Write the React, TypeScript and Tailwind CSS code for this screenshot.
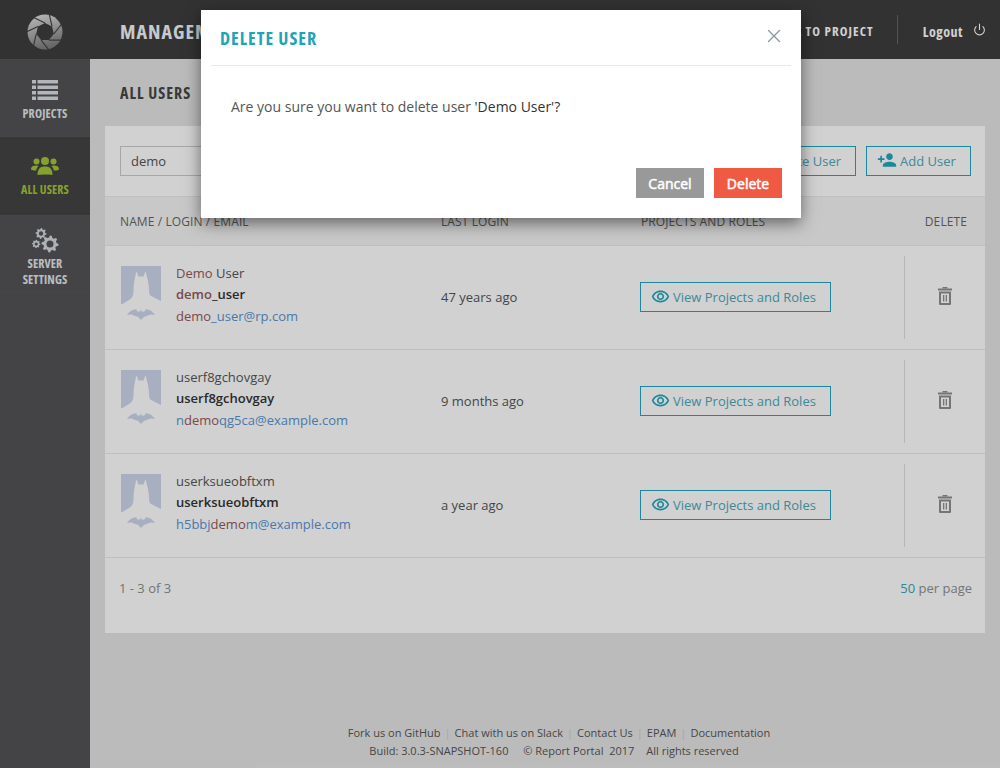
import { Power, X } from 'lucide-react';
import { MdOutlineRemoveRedEye, MdPersonAdd } from 'react-icons/md';
import type { ReactNode } from 'react';

const condensed = "font-['Open_Sans',sans-serif] font-bold [font-stretch:75%]";

const users = [
  {
    name: <><Hit>Demo</Hit> User</>,
    login: <><Hit>demo</Hit>_user</>,
    email: <><Hit>demo</Hit>_user@rp.com</>,
    lastLogin: '47 years ago',
  },
  {
    name: 'userf8gchovgay',
    login: 'userf8gchovgay',
    email: <>n<Hit>demo</Hit>qg5ca@example.com</>,
    lastLogin: '9 months ago',
  },
  {
    name: 'userksueobftxm',
    login: 'userksueobftxm',
    email: <>h5bbj<Hit>demo</Hit>m@example.com</>,
    lastLogin: 'a year ago',
  },
];

function Hit({ children }: { children: ReactNode }) {
  return <span className="text-[#96595a]">{children}</span>;
}

function Logo() {
  // aperture blades: one cut line per corner of the inner heptagon
  const blades = Array.from({ length: 7 }, (_, i) => {
    const a = (i * 2 * Math.PI) / 7 - Math.PI / 2;
    const b = ((i + 1) * 2 * Math.PI) / 7 - Math.PI / 2;
    const x1 = 18 + 9 * Math.cos(a);
    const y1 = 18 + 9 * Math.sin(a);
    const x2 = 18 + 9 * Math.cos(b);
    const y2 = 18 + 9 * Math.sin(b);
    return `M${x1} ${y1}L${x1 + (x2 - x1) * -1.9} ${y1 + (y2 - y1) * -1.9}`;
  });
  const hole = Array.from({ length: 7 }, (_, i) => {
    const a = (i * 2 * Math.PI) / 7 - Math.PI / 2;
    return `${18 + 9 * Math.cos(a)},${18 + 9 * Math.sin(a)}`;
  }).join(' ');
  return (
    <svg width="36" height="36" viewBox="0 0 36 36">
      <defs>
        <linearGradient id="logo" x1="0" y1="0" x2="0.3" y2="1">
          <stop offset="0" stopColor="#e6e6e6" />
          <stop offset="1" stopColor="#808080" />
        </linearGradient>
      </defs>
      <circle cx="18" cy="18" r="17.500" fill="url(#logo)" />
      <polygon points={hole} fill="#3e3e3e" />
      {blades.map((d, i) => (
        <path key={i} d={d} stroke="#3e3e3e" strokeWidth="1.100" fill="none" />
      ))}
    </svg>
  );
}

function ListIcon() {
  return (
    <svg width="26" height="20" viewBox="0 0 26 20" fill="#d9dde2">
      {[0, 5.5, 11, 16.5].map((y) => (
        <g key={y}>
          <rect x="0" y={y} width="4" height="3.500" />
          <rect x="5.500" y={y} width="20.500" height="3.500" />
        </g>
      ))}
    </svg>
  );
}

function UsersIcon() {
  return (
    <svg width="28" height="18" viewBox="0 0 28 18" fill="#a4c639">
      <circle cx="14" cy="4" r="4" />
      <circle cx="5.500" cy="4.500" r="3" />
      <circle cx="22.500" cy="4.500" r="3" />
      <path d="M0 12C0 9.500 2 8.500 5.500 8.500C6.500 8.500 7 8.700 7.500 9C6 10.500 5.300 12 5.200 13.500C3 13.500 0 13.500 0 12Z" />
      <path d="M28 12C28 9.500 26 8.500 22.500 8.500C21.500 8.500 21 8.700 20.500 9C22 10.500 22.700 12 22.800 13.500C25 13.500 28 13.500 28 12Z" />
      <path d="M6.500 18C6.500 12 9 9.500 14 9.500C19 9.500 21.500 12 21.500 18C18 17.200 10 17.200 6.500 18Z" />
    </svg>
  );
}

function gearPath(cx: number, cy: number, r: number) {
  const teeth = 8;
  const pts: string[] = [];
  for (let i = 0; i < teeth * 4; i++) {
    const a = (i * Math.PI) / (teeth * 2);
    const out = i % 4 === 0 || i % 4 === 1;
    const rad = out ? r : r * 0.76;
    pts.push(`${cx + rad * Math.cos(a)} ${cy + rad * Math.sin(a)}`);
  }
  return `M${pts.join('L')}Z`;
}

function GearsIcon() {
  const gears = [
    { x: 18, y: 16, r: 8.500, hole: 3.500 },
    { x: 9, y: 5.500, r: 5.500, hole: 2.200 },
    { x: 4.200, y: 16, r: 4.200, hole: 1.600 },
  ];
  return (
    <svg width="27" height="25" viewBox="0 0 27 25" fill="#d3d7dc">
      {gears.map((g) => (
        <g key={g.x}>
          <path d={gearPath(g.x, g.y, g.r)} />
          <circle cx={g.x} cy={g.y} r={g.hole} fill="#545456" />
        </g>
      ))}
    </svg>
  );
}

function TrashIcon() {
  return (
    <svg width="14" height="18" viewBox="0 0 14 18" fill="#8f8f8f">
      <rect x="4.500" y="0" width="5" height="1.500" />
      <rect x="0" y="1.500" width="14" height="2" />
      <path fillRule="evenodd" d="M1 4.500h12V17a1 1 0 0 1-1 1H2a1 1 0 0 1-1-1zM3 6.500v9.500h8V6.500z" />
      <rect x="5" y="8" width="1.300" height="6.500" />
      <rect x="7.700" y="8" width="1.300" height="6.500" />
    </svg>
  );
}

function Avatar() {
  return (
    <svg width="40" height="54" viewBox="0 0 40 54" className="shrink-0">
      <rect width="40" height="38" fill="#cdd6ec" />
      <path
        d="M15.500 5L17.500 10.500H22.500L24.500 5C26 11 28 17 28 24C28 27 28.500 29 30 30L40 35V42H0V39L9.500 33C12 31 12.500 28 12.500 24C12.500 17 14 11 15.500 5Z"
        fill="#ffffff"
      />
      <path
        d="M6 49C9 44 13 43 15.500 43.500C16 45.500 17 46 18.500 45.500L19.500 44L21 45.500C22.500 46 24 45.500 24.500 43.500C27 43 31 44 34 49C31 48 28 48.500 26 50C24 50 22 51.500 20 54C18 51.500 16 50 14 50C12 48.500 9 48 6 49Z"
        fill="#cdd6ec"
      />
    </svg>
  );
}

function NavItem({
  icon,
  label,
  active,
  className,
}: {
  icon: ReactNode;
  label: ReactNode;
  active?: boolean;
  className: string;
}) {
  return (
    <div
      className={`flex flex-col items-center border-b border-[#575757] ${className} ${
        active ? 'bg-[#444444] text-[#a4c639]' : 'bg-[#545456] text-[#e3e7ec]'
      }`}
    >
      <div className="flex h-[26px] items-center">{icon}</div>
      <div className={`${condensed} mt-[3px] text-center text-[12px] leading-4 tracking-[0.15px]`}>{label}</div>
    </div>
  );
}

function Sidebar() {
  return (
    <aside className="flex w-[90px] shrink-0 flex-col bg-[#545456]">
      <div className="flex h-[60px] items-center justify-center border-b border-[#575757] bg-[#3e3e3e] pt-[4px]">
        <Logo />
      </div>
      <NavItem icon={<ListIcon />} label="PROJECTS" className="h-[77px] pt-[17px]" />
      <NavItem icon={<UsersIcon />} label="ALL USERS" active className="h-[79px] pt-[16px]" />
      <NavItem
        icon={<GearsIcon />}
        label={<>SERVER<br />SETTINGS</>}
        className="h-[77px] pt-[11px]"
      />
    </aside>
  );
}

function OutlineButton({ children, className }: { children: ReactNode; className: string }) {
  return (
    <span className={`flex h-[30px] items-center border border-[#1fa8be] text-[13px] text-[#4ba9ba] ${className}`}>
      {children}
    </span>
  );
}

function UserRow({ user }: { user: (typeof users)[number] }) {
  return (
    <div className="flex h-[104px] border-b border-[#e9e9e9] pl-[16px] pr-[20px] pt-[20px]">
      <Avatar />
      <div className="ml-[15px] -mt-[3px] w-[265px] text-[13px]">
        <div className="leading-[21px] text-[#555555]">{user.name}</div>
        <div className="font-semibold leading-[21px] text-[#333333]">{user.login}</div>
        <div className="leading-[23px] text-[#5a94d0]">{user.email}</div>
      </div>
      <div className="w-[199px] pt-[19px] text-[13px] leading-[24px] text-[#555555]">{user.lastLogin}</div>
      <div className="w-[264px] pt-[16px]">
        <OutlineButton className="w-[191px] pl-[10px]">
          <MdOutlineRemoveRedEye size={19} color="#1fa8be" className="mr-[3px] -mt-[2px]" />
          <span className="pt-[1px]">View Projects and Roles</span>
        </OutlineButton>
      </div>
      <div className="-mt-[10px] h-[83px] flex-1 border-l border-[#dedede] pl-[33px] pt-[31px]">
        <TrashIcon />
      </div>
    </div>
  );
}

function UsersCard() {
  return (
    <section className="mx-[15px] h-[507px] bg-white">
      <div className="flex h-[70px] items-center justify-between pl-[15px] pr-[14px]">
        <div className="flex h-[30px] w-[200px] items-center border border-[#cccccc] pl-[10px] pt-[1px] text-[13px] text-[#555555]">
          demo
        </div>
        <div className="flex gap-[10px]">
          <OutlineButton className="w-[130px] justify-end pr-[14px]">
            <span className="pt-[1px]">Invite User</span>
          </OutlineButton>
          <OutlineButton className="w-[105px] pl-[10px]">
            <MdPersonAdd size={20} color="#1fa8be" className="mr-[3px] -mt-[2px]" />
            <span className="pt-[1px]">Add User</span>
          </OutlineButton>
        </div>
      </div>
      <div className="flex h-[50px] items-center border-y border-[#e9e9e9] bg-[#f5f5f5] pl-[15px] pr-[18px] pt-[1px] text-[12px] tracking-[0.1px] text-[#666666]">
        <div className="w-[321px]">NAME / LOGIN / EMAIL</div>
        <div className="w-[200px]">LAST LOGIN</div>
        <div className="flex-1">PROJECTS AND ROLES</div>
        <div>DELETE</div>
      </div>
      {users.map((user, i) => (
        <UserRow key={i} user={user} />
      ))}
      <div className="flex items-center justify-between pl-[14px] pr-[13px] pt-[20px] text-[13px] leading-5 text-[#8f8f8f]">
        <div>1 - 3 of 3</div>
        <div>
          <span className="text-[#3ea5b8]">50</span> per page
        </div>
      </div>
    </section>
  );
}

function Footer() {
  const sep = <span className="mx-[4px] text-[#cccccc]">|</span>;
  return (
    <footer className="mt-auto h-[44px] pl-[28px] text-center text-[11px] leading-[18px] text-[#555555]">
      <div>
        Fork us on GitHub{sep}Chat with us on Slack{sep}Contact Us{sep}EPAM{sep}Documentation
      </div>
      <div className="pr-[10px]">
        Build: 3.0.3-SNAPSHOT-160 <span className="ml-[12px]">© Report Portal&nbsp; 2017</span>
        <span className="ml-[12px]">All rights reserved</span>
      </div>
    </footer>
  );
}

function DeleteModal() {
  return (
    <div className="absolute left-[201px] top-[10px] h-[208px] w-[600px] bg-white shadow-[0_5px_15px_rgba(0,0,0,0.5)]">
      <div className="mx-[10px] flex h-[56px] items-center justify-between border-b border-[#e9e9e9] pl-[9px] pr-[6px]">
        <h2 className={`${condensed} mt-[2px] text-[18px] tracking-[1px] text-[#1fa3b9]`}>DELETE USER</h2>
        <X size={22} strokeWidth={1.5} className="-mt-[4px] text-[#8c9aa0]" />
      </div>
      <p className="pl-[30px] pt-[31px] text-[14px] leading-5 text-[#555555]">
        Are you sure you want to delete user <span className="font-medium text-[#333333]">'Demo User'?</span>
      </p>
      <div className="flex justify-end gap-[10px] pr-[19px] pt-[51px]">
        <button className="h-[30px] w-[68px] bg-[#999999] text-[14px] text-white [-webkit-text-stroke:0.5px_white]">
          Cancel
        </button>
        <button className="h-[30px] w-[68px] bg-[#ee5a43] text-[14px] text-white [-webkit-text-stroke:0.5px_white]">
          Delete
        </button>
      </div>
    </div>
  );
}

export default function App() {
  return (
    <div className="relative flex h-screen overflow-hidden font-['Open_Sans',sans-serif]">
      <Sidebar />
      <main className="flex flex-1 flex-col bg-[#e5e5e5]">
        <header className="flex h-[59px] shrink-0 items-center bg-[#3e3e3e] pl-[30px] text-white">
          <div className={`${condensed} mt-[4px] text-[20px] tracking-[1px] text-[#f2f6fa]`}>MANAGEMENT</div>
          <div className={`${condensed} ml-auto mt-[4px] text-[13px] tracking-[1.1px]`}>BACK TO PROJECT</div>
          <div className="ml-[23px] -mt-[1px] h-[29px] w-px bg-[#666666]" />
          <div className={`${condensed} ml-[25px] mt-[4px] text-[14px] tracking-[0.5px]`}>Logout</div>
          <Power size={13} strokeWidth={2} className="ml-[10px] mr-[14px]" />
        </header>
        <h1 className={`${condensed} h-[67px] pl-[30px] pt-[21px] text-[16px] leading-[26px] tracking-[1px] text-[#464646]`}>
          ALL USERS
        </h1>
        <UsersCard />
        <Footer />
      </main>
      <div className="absolute inset-0 bg-black/[0.18]" />
      <DeleteModal />
    </div>
  );
}
